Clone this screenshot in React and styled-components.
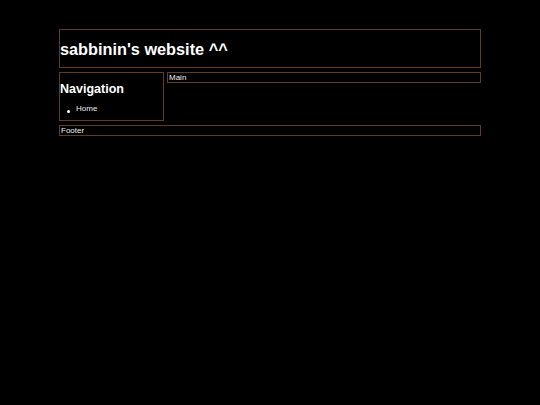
import React from "react";
import styled, { createGlobalStyle } from "styled-components";

const Global = createGlobalStyle`
  html, body {
    margin: 0;
    padding: 0;
    background: #000;
    color: #fff;
    font-family: "Liberation Sans", Arial, sans-serif;
    -webkit-font-smoothing: antialiased;
  }
`;

const Page = styled.div`
  width: 422px;
  margin: 0 auto;
  padding-top: 29px;
  display: flex;
  flex-direction: column;
  gap: 4px;
`;

const Box = styled.div`
  border: 1px solid #5e3d2a;
  box-sizing: border-box;
  color: #eee;
`;

const Header = styled(Box)`
  height: 39px;
  display: flex;
  align-items: center;
  padding-top: 1px;
`;

const Title = styled.h1`
  margin: 0;
  font-size: 16.3px;
  font-weight: bold;
  color: #fff;
`;

const Row = styled.div`
  display: flex;
  gap: 3px;
  align-items: flex-start;
`;

const Nav = styled(Box)`
  width: 105px;
  height: 49px;
  padding-top: 8px;
`;

const NavTitle = styled.h2`
  margin: 0;
  font-size: 12.5px;
  font-weight: bold;
  line-height: 16px;
  color: #fff;
`;

const List = styled.ul`
  list-style: none;
  margin: 7px 0 0;
  padding-left: 7px;
  font-size: 8px;
  line-height: 10px;
`;

const Item = styled.li`
  display: flex;
  align-items: flex-end;
  gap: 6px;
  &::before {
    content: "";
    width: 3px;
    height: 3px;
    border-radius: 50%;
    background: #fff;
    transform: translateY(-1px);
  }
`;

const Main = styled(Box)`
  flex: 1;
  height: 11px;
  font-size: 8px;
  line-height: 9px;
  padding-left: 1px;
`;

const Footer = styled(Box)`
  height: 11px;
  font-size: 8px;
  line-height: 9px;
  padding-left: 1px;
`;

export default function App() {
  return (
    <>
      <Global />
      <Page>
        <Header>
          <Title>sabbinin's website ^^</Title>
        </Header>
        <Row>
          <Nav>
            <NavTitle>Navigation</NavTitle>
            <List>
              <Item>Home</Item>
            </List>
          </Nav>
          <Main>Main</Main>
        </Row>
        <Footer>Footer</Footer>
      </Page>
    </>
  );
}
